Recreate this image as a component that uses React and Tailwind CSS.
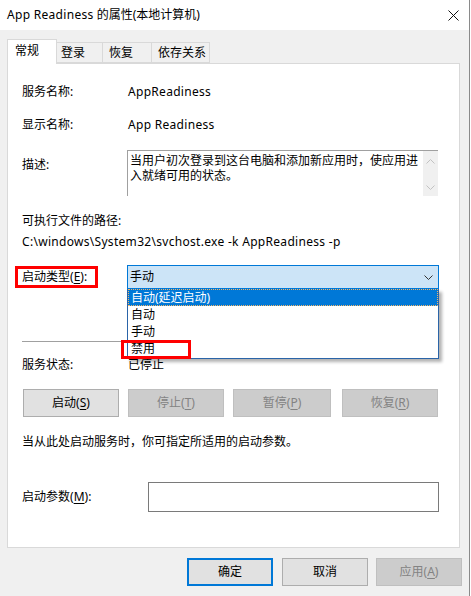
import React from 'react';

const font = { fontFamily: '"Noto Sans", "Noto Sans CJK SC", sans-serif' };

// access-key letter underline
const Key = ({ k }) => (
    <>
        (<span className="underline underline-offset-2">{k}</span>)
    </>
);

const Btn = ({ children, disabled, primary, className = '' }) => (
    <div
        className={`h-[28px] flex items-center justify-center text-[12px] ${
            disabled
                ? 'bg-[#cccccc] border border-[#bfbfbf] text-[#838383]'
                : primary
                ? 'bg-[#e1e1e1] border-2 border-[#0078d7] text-black'
                : 'bg-[#e1e1e1] border border-[#adadad] text-black'
        } ${className}`}
    >
        {children}
    </div>
);

const Chevron = ({ up, color = '#c2c2c2' }) => (
    <svg width="9" height="5" viewBox="0 0 9 5">
        <path d={up ? 'M0.5 4.5 L4.5 0.5 L8.5 4.5' : 'M0.5 0.5 L4.5 4.5 L8.5 0.5'} fill="none" stroke={color} strokeWidth="1" />
    </svg>
);

export default function App() {
    return (
        <div style={font} className="relative w-[470px] h-[596px] bg-[#f0f0f0] border-r border-[#8a8a8a] text-black overflow-hidden">
            {/* Title bar */}
            <div className="h-[30px] bg-white flex items-center justify-between pl-[7px] pr-[10px]">
                <span className="text-[12px] leading-[16px]"><span className="tracking-[0.3px]">App Readiness</span> 的属性(本地计算机)</span>
                <svg width="11" height="11" viewBox="0 0 11 11">
                    <path d="M0.5 0.5 L10.5 10.5 M10.5 0.5 L0.5 10.5" stroke="#111" strokeWidth="1" />
                </svg>
            </div>

            {/* Tabs */}
            <div className="flex items-end px-[7px] h-[33px] text-[12px]">
                <div className="relative z-10 w-[50px] h-[25px] -mb-px bg-white border border-[#d9d9d9] border-b-0 flex items-center pl-[7px] pb-[2px]">常规</div>
                <div className="w-[46px] h-[21px] bg-[#f0f0f0] border border-[#d9d9d9] border-l-0 flex items-center pl-[4px]">登录</div>
                <div className="w-[49px] h-[21px] bg-[#f0f0f0] border border-[#d9d9d9] border-l-0 flex items-center pl-[6px]">恢复</div>
                <div className="w-[58px] h-[21px] bg-[#f0f0f0] border border-[#d9d9d9] border-l-0 flex items-center pl-[6px]">依存关系</div>
            </div>

            {/* Panel */}
            <div className="mx-[7px] w-[453px] h-[485px] bg-white border border-[#d9d9d9] pl-[14px] text-[12px] leading-[16px]">
                <div className="flex mt-[20px]">
                    <div className="w-[106px]">服务名称:</div>
                    <div className="tracking-[0.3px]">AppReadiness</div>
                </div>
                <div className="flex mt-[17px]">
                    <div className="w-[106px]">显示名称:</div>
                    <div className="tracking-[0.3px]">App Readiness</div>
                </div>

                <div className="flex mt-[17px]">
                    <div className="w-[105px] mt-[7px]">描述:</div>
                    <div className="w-[311px] h-[46px] flex border-t border-l border-[#a0a0a0]">
                        <div className="flex-1 pl-[2px] pt-[2px] leading-[15px] whitespace-nowrap">
                            <div>当用户初次登录到这台电脑和添加新应用时，使应用进</div>
                            <div>入就绪可用的状态。</div>
                        </div>
                        <div className="w-[15px] bg-[#f0f0f0] flex flex-col items-center justify-between pt-[8px] pb-[6px]">
                            <Chevron up />
                            <Chevron />
                        </div>
                    </div>
                </div>

                <div className="mt-[17px]">可执行文件的路径:</div>
                <div className="mt-[5px] tracking-[0.3px]">C:\windows\System32\svchost.exe -k AppReadiness -p</div>

                <div className="flex items-center mt-[15px]">
                    <div className="w-[105px]">启动类型<Key k="E" />:</div>
                    <div className="w-[312px] h-[24px] bg-[#cce4f7] border border-[#0078d7] flex items-center justify-between pl-[2px] pr-[5px]">
                        <span>手动</span>
                        <Chevron color="#333" />
                    </div>
                </div>

                <div className="mt-[52px] w-[416px] h-px bg-[#a0a0a0]" />

                <div className="flex mt-[15px]">
                    <div className="w-[106px]">服务状态:</div>
                    <div>已停止</div>
                </div>

                <div className="flex mt-[16px] ml-[1px]">
                    <Btn className="w-[96px]">启动<Key k="S" /></Btn>
                    <Btn disabled className="w-[96px] ml-[9px]">停止<Key k="T" /></Btn>
                    <Btn disabled className="w-[98px] ml-[9px]">暂停<Key k="P" /></Btn>
                    <Btn disabled className="w-[96px] ml-[11px]">恢复<Key k="R" /></Btn>
                </div>

                <div className="mt-[17px]">当从此处启动服务时，你可指定所适用的启动参数。</div>

                <div className="flex items-center mt-[32px]">
                    <div className="w-[126px]">启动参数<Key k="M" />:</div>
                    <div className="w-[291px] h-[30px] border border-[#7a7a7a] bg-white" />
                </div>
            </div>

            {/* Dialog buttons */}
            <div className="flex mt-[10px] pl-[187px]">
                <Btn primary className="w-[86px]">确定</Btn>
                <Btn className="w-[86px] ml-[9px]">取消</Btn>
                <Btn disabled className="w-[86px] ml-[8px]">应用<Key k="A" /></Btn>
            </div>

            {/* Open dropdown list */}
            <div className="absolute left-[127px] top-[289px] w-[312px] h-[70px] bg-white border border-t-0 border-[#2a64a8] shadow-[3px_3px_3px_rgba(0,0,0,0.3)] text-[12px] leading-[15px]">
                <div className="h-[17px] bg-[#0078d7] text-white border border-dotted border-[#f3b66a] flex items-center pl-[2px]">自动(延迟启动)</div>
                <div className="h-[17px] flex items-center pl-[3px]">自动</div>
                <div className="h-[17px] flex items-center pl-[3px]">手动</div>
                <div className="h-[17px] flex items-center pl-[3px]">禁用</div>
            </div>

            {/* Red annotation boxes */}
            <div className="absolute left-[15px] top-[266px] w-[83px] h-[22px] border-[3px] border-[#ff0000]" />
            <div className="absolute left-[121px] top-[340px] w-[70px] h-[19px] border-[3px] border-[#ff0000]" />
        </div>
    );
}
